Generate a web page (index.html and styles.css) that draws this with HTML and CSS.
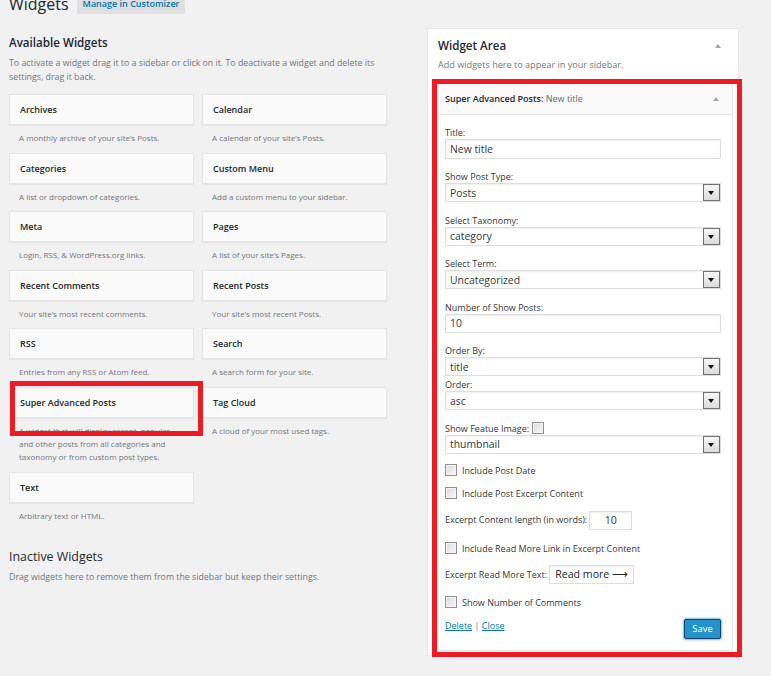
FILE: index.html
```html
<!DOCTYPE html>
<html lang="en">
<head>
    <meta charset="UTF-8">
    <title>Widgets</title>
    <link rel="stylesheet" href="styles.css">
</head>
<body>

    <div class="page-head">
        <h1>Widgets</h1>
        <a class="page-action" href="#">Manage in Customizer</a>
    </div>

    <div class="columns">
        <div class="widgets-left">
            <h2 class="section-title">Available Widgets</h2>
            <p class="section-desc">To activate a widget drag it to a sidebar or click on it. To deactivate a widget and delete its settings, drag it back.</p>

            <div class="widget-list">
                <div class="widget-item">
                    <div class="widget-top">Archives</div>
                    <p class="widget-description">A monthly archive of your site’s Posts.</p>
                </div>
                <div class="widget-item">
                    <div class="widget-top">Calendar</div>
                    <p class="widget-description">A calendar of your site’s Posts.</p>
                </div>
                <div class="widget-item">
                    <div class="widget-top">Categories</div>
                    <p class="widget-description">A list or dropdown of categories.</p>
                </div>
                <div class="widget-item">
                    <div class="widget-top">Custom Menu</div>
                    <p class="widget-description">Add a custom menu to your sidebar.</p>
                </div>
                <div class="widget-item">
                    <div class="widget-top">Meta</div>
                    <p class="widget-description">Login, RSS, &amp; WordPress.org links.</p>
                </div>
                <div class="widget-item">
                    <div class="widget-top">Pages</div>
                    <p class="widget-description">A list of your site’s Pages.</p>
                </div>
                <div class="widget-item">
                    <div class="widget-top">Recent Comments</div>
                    <p class="widget-description">Your site’s most recent comments.</p>
                </div>
                <div class="widget-item">
                    <div class="widget-top">Recent Posts</div>
                    <p class="widget-description">Your site’s most recent Posts.</p>
                </div>
                <div class="widget-item">
                    <div class="widget-top">RSS</div>
                    <p class="widget-description">Entries from any RSS or Atom feed.</p>
                </div>
                <div class="widget-item">
                    <div class="widget-top">Search</div>
                    <p class="widget-description">A search form for your site.</p>
                </div>
                <div class="widget-item">
                    <div class="widget-top">Super Advanced Posts</div>
                    <p class="widget-description">A widget that will display recent, popular and other posts from all categories and taxonomy or from custom post types.</p>
                </div>
                <div class="widget-item">
                    <div class="widget-top">Tag Cloud</div>
                    <p class="widget-description">A cloud of your most used tags.</p>
                </div>
                <div class="widget-item">
                    <div class="widget-top">Text</div>
                    <p class="widget-description">Arbitrary text or HTML.</p>
                </div>
            </div>

            <h2 class="section-title inactive">Inactive Widgets</h2>
            <p class="section-desc">Drag widgets here to remove them from the sidebar but keep their settings.</p>
        </div>

        <div class="widgets-right">
            <div class="sidebar-box">
                <div class="sidebar-name">
                    <h2>Widget Area</h2>
                    <span class="toggle"></span>
                </div>
                <p class="sidebar-desc">Add widgets here to appear in your sidebar.</p>

                <div class="widget">
                    <div class="widget-head">
                        <span class="widget-title">Super Advanced Posts: <span class="in-title">New title</span></span>
                        <span class="toggle"></span>
                    </div>

                    <form class="widget-inside">
                        <p class="field">
                            <label for="title">Title:</label>
                            <input class="widefat tall" type="text" id="title" value="New title">
                        </p>
                        <p class="field">
                            <label for="post_type">Show Post Type:</label>
                            <span class="select-wrap">
                                <select id="post_type"><option>Posts</option></select>
                                <span class="select-arrow"></span>
                            </span>
                        </p>
                        <p class="field">
                            <label for="taxonomy">Select Taxonomy:</label>
                            <span class="select-wrap">
                                <select id="taxonomy"><option>category</option></select>
                                <span class="select-arrow"></span>
                            </span>
                        </p>
                        <p class="field">
                            <label for="term">Select Term:</label>
                            <span class="select-wrap">
                                <select id="term"><option>Uncategorized</option></select>
                                <span class="select-arrow"></span>
                            </span>
                        </p>
                        <p class="field">
                            <label for="number">Number of Show Posts:</label>
                            <input class="widefat" type="text" id="number" value="10">
                        </p>
                        <p class="field tight">
                            <label for="orderby">Order By:</label>
                            <span class="select-wrap">
                                <select id="orderby"><option>title</option></select>
                                <span class="select-arrow"></span>
                            </span>
                        </p>
                        <p class="field">
                            <label for="order">Order:</label>
                            <span class="select-wrap">
                                <select id="order"><option>asc</option></select>
                                <span class="select-arrow"></span>
                            </span>
                        </p>
                        <p class="field short">
                            <label for="thumb">Show Featue Image: <input class="check" type="checkbox" id="thumb"></label>
                            <span class="select-wrap">
                                <select id="thumb_size"><option>thumbnail</option></select>
                                <span class="select-arrow"></span>
                            </span>
                        </p>
                        <p class="check-row">
                            <input class="check" type="checkbox" id="show_date">
                            <label for="show_date">Include Post Date</label>
                        </p>
                        <p class="check-row">
                            <input class="check" type="checkbox" id="show_excerpt">
                            <label for="show_excerpt">Include Post Excerpt Content</label>
                        </p>
                        <p class="inline-row">
                            <label for="excerpt_len">Excerpt Content length (in words):</label>
                            <input class="small-text len" type="text" id="excerpt_len" value="10">
                        </p>
                        <p class="check-row">
                            <input class="check" type="checkbox" id="read_more">
                            <label for="read_more">Include Read More Link in Excerpt Content</label>
                        </p>
                        <p class="inline-row">
                            <label for="more_text">Excerpt Read More Text:</label>
                            <input class="small-text more" type="text" id="more_text" value="Read more ⟶">
                        </p>
                        <p class="check-row">
                            <input class="check" type="checkbox" id="comments">
                            <label for="comments">Show Number of Comments</label>
                        </p>

                        <div class="widget-actions">
                            <div class="action-links">
                                <a href="#">Delete</a> <span class="sep">|</span> <a href="#">Close</a>
                            </div>
                            <button type="button" class="save-btn">Save</button>
                        </div>
                    </form>
                </div>
            </div>
        </div>
    </div>

    <!-- red marks drawn over the page -->
    <div class="mark mark-left"></div>
    <div class="mark mark-right"></div>

</body>
</html>
```

FILE: styles.css
```css
body {
    margin: 0;
    padding: 0 9px;
    background-color: #f1f1f1;
    font-family: "Open Sans", Arial, sans-serif;
    color: #23282d;
    overflow: hidden;
}
p {
    margin: 0;
}

/* heading row */
.page-head {
    display: flex;
    align-items: center;
    height: 24px;
    margin-top: -8px;
}
.page-head h1 {
    margin: 0;
    font-size: 16px;
    font-weight: 400;
    line-height: 24px;
}
.page-action {
    margin-left: 8px;
    padding: 0 6px;
    height: 20px;
    line-height: 20px;
    background-color: #e0e0e0;
    border-radius: 2px;
    color: #0073aa;
    font-size: 9px;
    font-weight: 600;
    text-decoration: none;
}

.columns {
    display: flex;
    align-items: flex-start;
}

/* left side */
.widgets-left {
    width: 378px;
}
.section-title {
    margin: 19px 0 0;
    font-size: 11.6px;
    font-weight: 600;
    line-height: 16px;
}
.section-title.inactive {
    margin-top: 19px;
    font-size: 12.4px;
    font-weight: 400;
}
.section-desc {
    margin-top: 5px;
    font-size: 8.8px;
    line-height: 14px;
    color: #72777c;
}
.widget-list {
    display: grid;
    grid-template-columns: 185px 185px;
    column-gap: 8px;
    margin-top: 10px;
}
.widget-top {
    box-sizing: border-box;
    height: 31px;
    padding-left: 10px;
    background-color: #fafafa;
    border: 1px solid #e5e5e5;
    box-shadow: 0 1px 1px rgba(0,0,0,0.04);
    font-size: 9px;
    font-weight: 600;
    line-height: 29px;
}
.widget-description {
    margin: 6px 8px 8.6px 10px;
    font-size: 8px;
    line-height: 13px;
    color: #72777c;
}

/* right side */
.widgets-right {
    width: 312px;
    margin-left: 40px;
    margin-top: 12px;
}
.sidebar-box {
    background-color: #fff;
    border: 1px solid #e5e5e5;
    box-shadow: 0 1px 1px rgba(0,0,0,0.04);
    padding-bottom: 4px;
}
.sidebar-name {
    display: flex;
    justify-content: space-between;
    align-items: center;
    padding: 9px 17px 0 10px;
}
.sidebar-name h2 {
    margin: 0;
    font-size: 11.6px;
    font-weight: 600;
    line-height: 16px;
}
.sidebar-desc {
    margin: 4px 0 0 10px;
    font-size: 9.1px;
    line-height: 13px;
    color: #72777c;
}
.toggle {
    width: 0;
    height: 0;
    border-left: 3px solid transparent;
    border-right: 3px solid transparent;
    border-bottom: 4px solid #a0a5aa;
}

.widget {
    margin: 11.5px 5px 0 9px;
    border: 1px solid #e5e5e5;
    box-shadow: 0 1px 1px rgba(0,0,0,0.04);
}
.widget-head {
    display: flex;
    justify-content: space-between;
    align-items: center;
    height: 30px;
    padding: 0 13px 0 7px;
    background-color: #fafafa;
    border-bottom: 1px solid #e5e5e5;
}
.widget-title {
    font-size: 9px;
    font-weight: 600;
}
.in-title {
    font-weight: 400;
    color: #5f676f;
}

.widget-inside {
    padding: 11px 11px 11px 7px;
    font-size: 9px;
    color: #32373c;
}
.field {
    margin-bottom: 11.5px;
}
.field.tight {
    margin-bottom: 2px;
}
.field.short {
    margin-bottom: 10px;
}
.field label {
    display: block;
    line-height: 13px;
}
.widefat, .small-text, select {
    box-sizing: border-box;
    height: 19px;
    margin: 0;
    padding: 0 4px;
    border: 1px solid #ddd;
    box-shadow: inset 0 1px 2px rgba(0,0,0,0.07);
    background-color: #fff;
    font-family: "Open Sans", Arial, sans-serif;
    font-size: 10.4px;
    color: #32373c;
    outline: none;
}
.widefat {
    display: block;
    width: 100%;
}
.widefat.tall {
    height: 20px;
}

/* select with the old square arrow box */
.select-wrap {
    position: relative;
    display: block;
}
.select-wrap select {
    display: block;
    width: 100%;
    appearance: none;
    -webkit-appearance: none;
    border-radius: 0;
}
.select-arrow {
    position: absolute;
    top: 1px;
    right: 1px;
    width: 17px;
    height: 17px;
    box-sizing: border-box;
    border: 1px solid #707070;
    background: linear-gradient(#f6f6f6, #dcdcdc);
    pointer-events: none;
}
.select-arrow::after {
    content: "";
    position: absolute;
    left: 4px;
    top: 6px;
    border-left: 3.5px solid transparent;
    border-right: 3.5px solid transparent;
    border-top: 4px solid #111;
}

.check {
    appearance: none;
    -webkit-appearance: none;
    box-sizing: border-box;
    width: 12px;
    height: 12px;
    margin: 0;
    border: 1px solid #8e8f8f;
    background: linear-gradient(135deg, #dcdcdc, #f7f7f7);
    box-shadow: inset 0 0 0 1px #f4f4f4;
    vertical-align: -2px;
}
.check-row {
    display: flex;
    align-items: center;
    gap: 5px;
    height: 13px;
    margin-bottom: 10px;
}
.inline-row {
    display: flex;
    align-items: center;
    gap: 2px;
    margin-bottom: 12px;
}
.small-text {
    text-align: center;
    font-size: 10.6px;
}
.small-text.len {
    width: 43px;
    margin-top: 1px;
}
.small-text.more {
    width: 85px;
    color: #23282d;
}

.widget-actions {
    display: flex;
    justify-content: space-between;
    align-items: flex-start;
}
.action-links {
    line-height: 13px;
}
.action-links a {
    color: #0073aa;
}
.sep {
    color: #72777c;
}
.save-btn {
    box-sizing: border-box;
    width: 37px;
    height: 20px;
    padding: 0;
    background-color: #2393c8;
    border: 1px solid #10466a;
    border-radius: 2px;
    box-shadow: 0 0 2px 1px rgba(30,140,190,0.6);
    color: #fff;
    font-family: "Open Sans", Arial, sans-serif;
    font-size: 9.4px;
    cursor: pointer;
}

.mark {
    position: absolute;
    box-sizing: border-box;
    border: 5px solid #ed1c24;
}
.mark-left {
    left: 10px;
    top: 381px;
    width: 193px;
    height: 55px;
}
.mark-right {
    left: 432px;
    top: 79px;
    width: 310px;
    height: 578px;
}
```
